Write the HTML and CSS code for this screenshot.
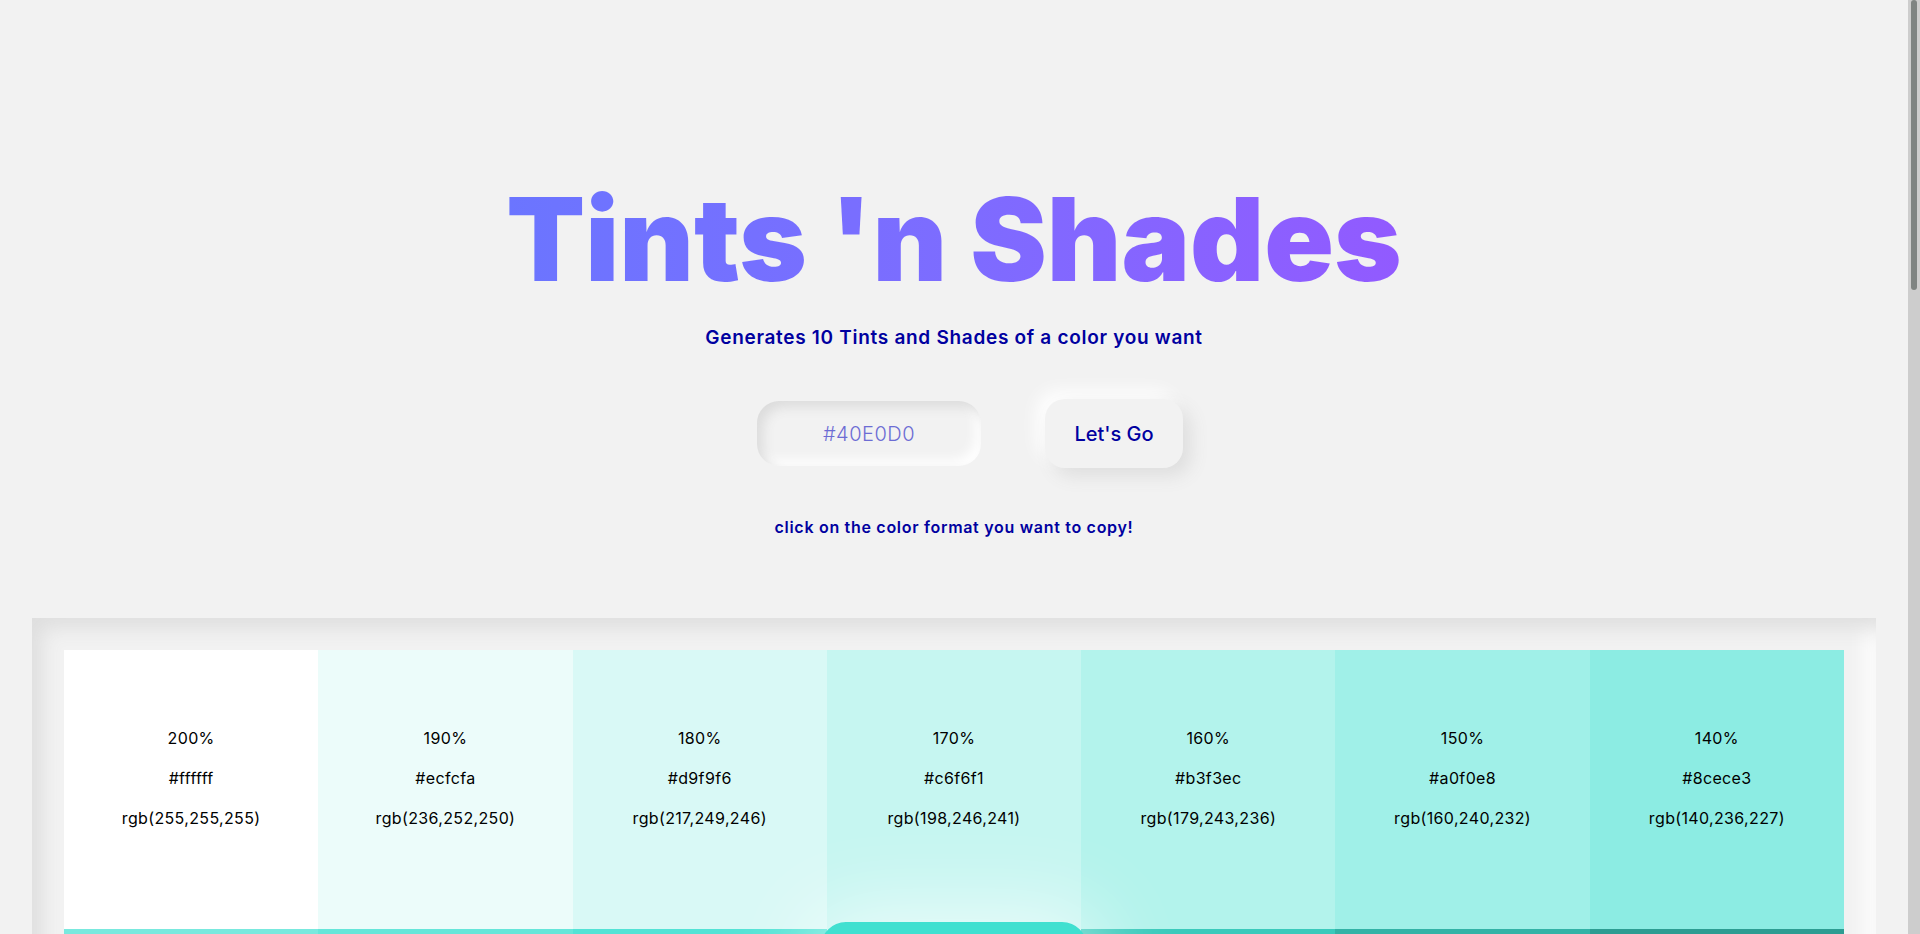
FILE: index.html
```html
<!DOCTYPE html>
<html lang="en">
<head>
<meta charset="utf-8">
<title>Tints 'n Shades</title>
<link rel="stylesheet" href="styles.css">
</head>
<body>
<header class="hero">
  <h1 class="title">Tints 'n Shades</h1>
  <p class="subtitle">Generates 10 Tints and Shades of a color you want</p>
  <form class="picker">
    <input class="picker-input" type="text" value="#40E0D0">
    <button class="picker-btn" type="button">Let's Go</button>
  </form>
  <p class="hint">click on the color format you want to copy!</p>
</header>
<main class="palette">
  <div class="grid">
    <div class="swatch" style="background:#ffffff"><p>200%</p><p>#ffffff</p><p>rgb(255,255,255)</p></div>
    <div class="swatch" style="background:#ecfcfa"><p>190%</p><p>#ecfcfa</p><p>rgb(236,252,250)</p></div>
    <div class="swatch" style="background:#d9f9f6"><p>180%</p><p>#d9f9f6</p><p>rgb(217,249,246)</p></div>
    <div class="swatch" style="background:#c6f6f1"><p>170%</p><p>#c6f6f1</p><p>rgb(198,246,241)</p></div>
    <div class="swatch" style="background:#b3f3ec"><p>160%</p><p>#b3f3ec</p><p>rgb(179,243,236)</p></div>
    <div class="swatch" style="background:#a0f0e8"><p>150%</p><p>#a0f0e8</p><p>rgb(160,240,232)</p></div>
    <div class="swatch" style="background:#8cece3"><p>140%</p><p>#8cece3</p><p>rgb(140,236,227)</p></div>
    <div class="swatch" style="background:#79e9de"><p>130%</p><p>#79e9de</p><p>rgb(121,233,222)</p></div>
    <div class="swatch" style="background:#66e6d9"><p>120%</p><p>#66e6d9</p><p>rgb(102,230,217)</p></div>
    <div class="swatch" style="background:#53e3d5"><p>110%</p><p>#53e3d5</p><p>rgb(83,227,213)</p></div>
    <div class="swatch swatch-base" style="background:#40e0d0"><p>100%</p><p>#40e0d0</p><p>rgb(64,224,208)</p></div>
    <div class="swatch" style="background:#3acabb"><p>90%</p><p>#3acabb</p><p>rgb(58,202,187)</p></div>
    <div class="swatch" style="background:#33b3a6"><p>80%</p><p>#33b3a6</p><p>rgb(51,179,166)</p></div>
    <div class="swatch" style="background:#2d9d92"><p>70%</p><p>#2d9d92</p><p>rgb(45,157,146)</p></div>
    <div class="swatch dark" style="background:#26867d"><p>60%</p><p>#26867d</p><p>rgb(38,134,125)</p></div>
    <div class="swatch dark" style="background:#207068"><p>50%</p><p>#207068</p><p>rgb(32,112,104)</p></div>
    <div class="swatch dark" style="background:#1a5a53"><p>40%</p><p>#1a5a53</p><p>rgb(26,90,83)</p></div>
    <div class="swatch dark" style="background:#13433e"><p>30%</p><p>#13433e</p><p>rgb(19,67,62)</p></div>
    <div class="swatch dark" style="background:#0d2d2a"><p>20%</p><p>#0d2d2a</p><p>rgb(13,45,42)</p></div>
    <div class="swatch dark" style="background:#061615"><p>10%</p><p>#061615</p><p>rgb(6,22,21)</p></div>
    <div class="swatch dark" style="background:#000000"><p>0%</p><p>#000000</p><p>rgb(0,0,0)</p></div>
  </div>
</main>
<div class="scrollbar" aria-hidden="true"><div class="scrollbar-thumb"></div></div>
</body>
</html>
```

FILE: styles.css
```css
body {
  margin: 0 12px 0 0;
  min-height: 3008px;
  background: #f2f2f2;
  font-family: "Inter", "Noto Sans", sans-serif;
  color: #000;
}

.scrollbar {
  position: fixed;
  top: 0;
  right: 0;
  width: 12px;
  height: 100vh;
  background: #cdcdcd;
  z-index: 10;
}

.scrollbar-thumb {
  margin: 0 3px;
  height: 290px;
  background: #7f8482;
  border-radius: 3px;
}

.hero {
  display: flex;
  flex-direction: column;
  align-items: center;
  padding-top: 182px;
}

.title {
  margin: 0;
  font-size: 115px;
  line-height: 1;
  font-weight: 900;
  letter-spacing: 0;
  background: linear-gradient(90deg, #6b75ff 0%, #7d6cff 50%, #925aff 100%);
  -webkit-background-clip: text;
  background-clip: text;
  color: transparent;
}

.subtitle {
  margin: 29px 0 0;
  font-size: 19px;
  line-height: 24px;
  font-weight: 600;
  letter-spacing: 0.7px;
  color: #0000a0;
}

.picker {
  display: flex;
  align-items: center;
  gap: 64px;
  margin-top: 49px;
  padding-left: 32px;
}

.picker-input {
  box-sizing: border-box;
  width: 224px;
  height: 65px;
  border: none;
  outline: none;
  border-radius: 22px;
  background: #f2f2f2;
  box-shadow: inset 6px 6px 12px #dcdcdc, inset -6px -6px 12px #ffffff;
  text-align: center;
  font-family: inherit;
  font-size: 20px;
  font-weight: 300;
  letter-spacing: 0.5px;
  color: #6c6cd4;
}

.picker-btn {
  box-sizing: border-box;
  width: 138px;
  height: 69px;
  border: none;
  border-radius: 20px;
  background: #f2f2f2;
  box-shadow: 8px 8px 18px #dedede, -8px -8px 18px #ffffff;
  font-family: inherit;
  font-size: 20px;
  font-weight: 500;
  color: #0000a0;
  cursor: pointer;
}

.hint {
  margin: 47px 0 0;
  font-size: 16px;
  line-height: 24px;
  font-weight: 600;
  letter-spacing: 0.7px;
  color: #0000a0;
}

.palette {
  margin: 79px 32px 0;
  padding: 32px;
  box-shadow: inset 10px 10px 20px #dedede, inset -10px -10px 20px #ffffff;
}

.grid {
  display: grid;
  grid-template-columns: repeat(7, 1fr);
}

.swatch {
  height: 279px;
  box-sizing: border-box;
  padding-top: 76px;
  display: flex;
  flex-direction: column;
  align-items: center;
  gap: 16px;
  font-size: 16px;
  line-height: 24px;
  letter-spacing: 0.35px;
  cursor: pointer;
}

.swatch p {
  margin: 0;
}

.swatch.dark {
  color: #fff;
}

.swatch-base {
  transform: scale(1.05);
  border-radius: 24px;
  box-shadow: 0 0 80px 10px rgba(255, 255, 255, 0.7);
}
```
